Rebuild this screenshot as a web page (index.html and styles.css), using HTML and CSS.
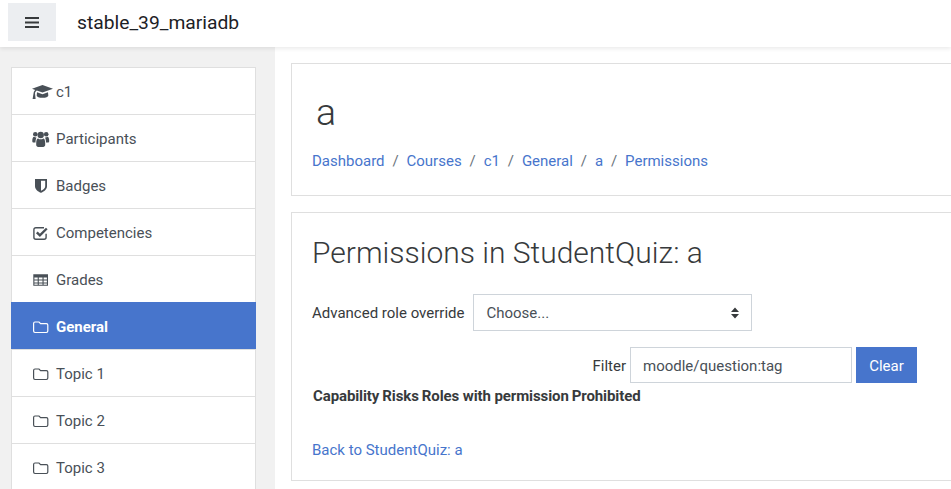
FILE: index.html
```html
<!DOCTYPE html>
<html lang="en">
<head>
    <meta charset="UTF-8">
    <meta name="viewport" content="width=device-width, initial-scale=1.0">
    <title>Permissions in StudentQuiz: a</title>
    <link rel="stylesheet" href="styles.css">
</head>
<body>
    <header class="navbar">
        <button class="nav-toggle" aria-label="Toggle menu">
            <svg class="bars" viewBox="0 0 14 11"><path d="M0 0h14v2H0zM0 4.500h14v2H0zM0 9h14v2H0z"/></svg>
        </button>
        <span class="brand">stable_39_mariadb</span>
    </header>

    <div class="page">
        <aside class="drawer">
            <nav class="nav-list">
                <a class="nav-item">
                    <svg class="icon" viewBox="0 0 24 16"><path d="M10.500 1 21 4.800 10.500 8.600 4.800 6.500C3.800 7.200 3.200 8 3 9.200l.6 5.800H.6L1.600 9C1.800 7.600 2.400 6.500 3.300 5.900L0 4.800z"/><path d="M5 8.200 10.500 10.200 16 8.200l.3 3.200c0 1.300-2.600 2.400-5.800 2.400s-5.800-1.100-5.800-2.400z"/></svg>
                    <span>c1</span>
                </a>
                <a class="nav-item">
                    <svg class="icon" viewBox="0 0 24 16"><circle cx="3.300" cy="3.200" r="2.300"/><circle cx="14.200" cy="3.200" r="2.300"/><circle cx="8.700" cy="4" r="3.200"/><path d="M.3 10c0-2.500.6-4.200 1.800-4.200.7.500 1.600.7 2.400.6-.6 1.300-1 2.800-1 5.200H1.600C.8 11.600.3 11 .3 10zM17.200 10c0-2.500-.6-4.200-1.800-4.200-.7.500-1.600.7-2.400.6.600 1.300 1 2.800 1 5.200h1.900c.8 0 1.300-.6 1.300-1.600z"/><path d="M4.200 12.500c0-3.200.7-5.100 2-5.100.7.600 1.500.9 2.500.9s1.800-.3 2.500-.9c1.300 0 2 1.900 2 5.100v1.300c0 1.300-.8 2.200-2 2.200H6.200c-1.200 0-2-.9-2-2.200z"/></svg>
                    <span>Participants</span>
                </a>
                <a class="nav-item">
                    <svg class="icon" viewBox="0 0 24 16"><path fill-rule="evenodd" d="M3 1h12v7.200C15 11.500 11.500 13.700 9 14.800 6.500 13.700 3 11.500 3 8.200zM9 2.800v10c1.900-1 4.200-2.600 4.200-4.600V2.800z"/></svg>
                    <span>Badges</span>
                </a>
                <a class="nav-item">
                    <svg class="icon" viewBox="0 0 24 16"><path class="box" d="M12 2.800H3.900c-1.200 0-2 .8-2 2v7.400c0 1.200.8 2 2 2h8.200c1.200 0 2-.8 2-2V8.800"/><path class="tick" d="M4.800 7.300 7.900 10.400 14.800 3.500"/></svg>
                    <span>Competencies</span>
                </a>
                <a class="nav-item">
                    <svg class="icon" viewBox="0 0 24 16"><path fill-rule="evenodd" d="M1.300 2.300H16v11.400H1.300zM2.400 5.500v2h3.300v-2zM6.800 5.500v2h3.700v-2zM11.600 5.500v2h3.300v-2zM2.400 8.500v2h3.300v-2zM6.800 8.500v2h3.700v-2zM11.600 8.500v2h3.300v-2zM2.400 11.400v1.300h3.300v-1.300zM6.800 11.400v1.300h3.700v-1.300zM11.600 11.400v1.300h3.300v-1.300z"/></svg>
                    <span>Grades</span>
                </a>
                <a class="nav-item active">
                    <svg class="icon" viewBox="0 0 24 16"><path class="outline" d="M3 13.500h11.400c.9 0 1.400-.5 1.400-1.400V6c0-.9-.5-1.400-1.400-1.400H8.600L7 3H3c-.9 0-1.400.5-1.400 1.400v7.700c0 .9.500 1.400 1.400 1.400z"/></svg>
                    <span>General</span>
                </a>
                <a class="nav-item">
                    <svg class="icon" viewBox="0 0 24 16"><path class="outline" d="M3 13.500h11.400c.9 0 1.400-.5 1.400-1.400V6c0-.9-.5-1.400-1.400-1.400H8.600L7 3H3c-.9 0-1.400.5-1.400 1.400v7.700c0 .9.500 1.400 1.400 1.400z"/></svg>
                    <span>Topic 1</span>
                </a>
                <a class="nav-item">
                    <svg class="icon" viewBox="0 0 24 16"><path class="outline" d="M3 13.500h11.400c.9 0 1.400-.5 1.400-1.400V6c0-.9-.5-1.400-1.400-1.400H8.600L7 3H3c-.9 0-1.400.5-1.400 1.400v7.700c0 .9.500 1.400 1.400 1.400z"/></svg>
                    <span>Topic 2</span>
                </a>
                <a class="nav-item">
                    <svg class="icon" viewBox="0 0 24 16"><path class="outline" d="M3 13.500h11.400c.9 0 1.400-.5 1.400-1.400V6c0-.9-.5-1.400-1.400-1.400H8.600L7 3H3c-.9 0-1.400.5-1.400 1.400v7.700c0 .9.500 1.400 1.400 1.400z"/></svg>
                    <span>Topic 3</span>
                </a>
            </nav>
        </aside>

        <main class="main">
            <section class="card page-header">
                <h1>a</h1>
                <ol class="breadcrumb">
                    <li><a href="#">Dashboard</a></li>
                    <li><a href="#">Courses</a></li>
                    <li><a href="#">c1</a></li>
                    <li><a href="#">General</a></li>
                    <li><a href="#">a</a></li>
                    <li><a href="#">Permissions</a></li>
                </ol>
            </section>

            <section class="card content">
                <h2>Permissions in StudentQuiz: a</h2>
                <div class="role-row">
                    <label>Advanced role override</label>
                    <div class="select">
                        <span>Choose...</span>
                        <svg class="updown" viewBox="0 0 8 12"><path d="M4 .5 8 5H0zM0 7h8l-4 4.500z"/></svg>
                    </div>
                </div>
                <div class="filter-row">
                    <label for="filter">Filter</label>
                    <input id="filter" type="text" value="moodle/question:tag">
                    <button class="btn-clear">Clear</button>
                </div>
                <div class="table-head">
                    <span>Capability</span>
                    <span>Risks</span>
                    <span>Roles with permission</span>
                    <span>Prohibited</span>
                </div>
                <a class="back-link" href="#">Back to StudentQuiz: a</a>
            </section>
        </main>
    </div>
</body>
</html>
```
FILE: styles.css
```css
* {
    box-sizing: border-box;
}

html, body {
    height: 100%;
}

body {
    margin: 0;
    font-family: Roboto, "Liberation Sans", sans-serif;
    font-size: 15px;
    line-height: 22px;
    color: #373a3c;
    background-color: #fff;
    overflow: hidden;
}

a {
    color: #4775cc;
    text-decoration: none;
}

.navbar {
    display: flex;
    align-items: center;
    height: 47px;
    padding: 3px 8px 6px;
    background-color: #fff;
    box-shadow: 0 2px 4px rgba(0, 0, 0, 0.08);
    position: relative;
}

.nav-toggle {
    display: flex;
    align-items: center;
    justify-content: center;
    width: 48px;
    height: 38px;
    padding: 1px 0 0;
    border: 0;
    background-color: #eceef1;
}

.bars {
    width: 14px;
    height: 11px;
    fill: #373a3c;
}

.brand {
    margin-left: 21px;
    padding-top: 2px;
    font-size: 19.25px;
    color: #1d2125;
}

.page {
    display: flex;
    height: 442px;
}

.drawer {
    flex: 0 0 275px;
    padding: 20px 19px 0 11px;
    background-color: #f1f1f1;
}

.nav-list {
    border: 1px solid #dfdfdf;
    border-bottom: 0;
    background-color: #fff;
}

.nav-item {
    display: flex;
    align-items: center;
    height: 47px;
    padding: 2px 0 0 20px;
    border-bottom: 1px solid #dfdfdf;
    color: #495057;
}

.nav-item.active {
    height: 48px;
    margin: -1px -1px 0;
    padding: 3px 0 0 21px;
    background-color: #4775cc;
    color: #fff;
    font-weight: 700;
}

.icon {
    flex: none;
    width: 24px;
    height: 16px;
    fill: #495057;
}

.icon .outline,
.icon .box,
.icon .tick {
    fill: none;
    stroke: #495057;
}

.icon .outline {
    stroke-width: 1.2;
}

.icon .box {
    stroke-width: 1.4;
}

.icon .tick {
    stroke-width: 2.4;
}

.active .icon .outline {
    stroke: #fff;
}

.main {
    flex: 1;
    min-width: 0;
    padding: 16px 0 0 16px;
}

.card {
    margin-right: -40px;
    border: 1px solid #dfdfdf;
    background-color: #fff;
}

.page-header {
    height: 133px;
    padding: 26px 20px 0;
}

h1 {
    margin: 0 0 0 4px;
    font-size: 37.5px;
    font-weight: 300;
    line-height: 45px;
    color: #373a3c;
}

.breadcrumb {
    display: flex;
    margin: 15px 0 0;
    padding: 0;
    list-style: none;
}

.breadcrumb li + li::before {
    content: "/";
    padding: 0 7.9px;
    color: #6a737b;
}

.content {
    height: 269px;
    margin-top: 16px;
    padding: 22px 20px 0;
}

h2 {
    margin: 0;
    font-size: 30px;
    font-weight: 300;
    line-height: 36px;
    color: #373a3c;
}

.role-row {
    display: flex;
    align-items: center;
    margin-top: 23px;
}

.select {
    display: flex;
    align-items: center;
    justify-content: space-between;
    width: 279px;
    height: 37px;
    margin-left: 9px;
    padding: 0 12px;
    border: 1px solid #ced4da;
    color: #495057;
}

.updown {
    width: 8px;
    height: 12px;
    fill: #373a3c;
}

.filter-row {
    display: flex;
    align-items: center;
    justify-content: flex-end;
    width: 605px;
    margin-top: 16px;
}

.filter-row label {
    padding-top: 2px;
}

.filter-row input {
    width: 222px;
    height: 36px;
    margin-left: 4px;
    padding: 2px 12px 0;
    border: 1px solid #ced4da;
    font: inherit;
    color: #495057;
    background-color: #fff;
}

.btn-clear {
    width: 61px;
    height: 36px;
    margin-left: 4px;
    padding: 2px 0 0;
    border: 0;
    background-color: #4775cc;
    color: #fff;
    font: inherit;
}

.table-head {
    display: flex;
    gap: 3px;
    margin-top: 2px;
    padding-left: 1px;
    font-weight: 700;
    letter-spacing: -0.1px;
    color: #373a3c;
}

.back-link {
    display: block;
    margin-top: 32px;
}
```
